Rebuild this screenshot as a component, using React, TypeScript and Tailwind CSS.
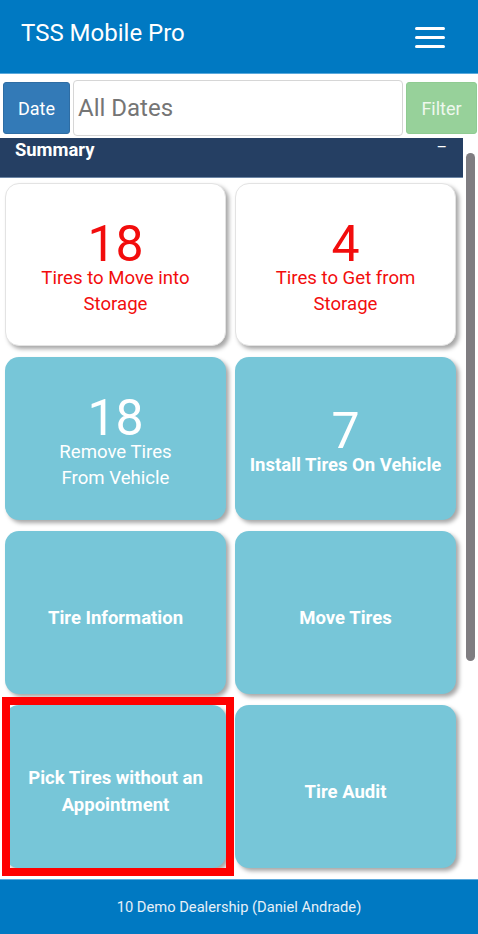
type TileProps = {
  count?: number;
  label: string[];
  light?: boolean;
  bold?: boolean;
  marked?: boolean;
};

function Tile({ count, label, light, bold, marked }: TileProps) {
  const text = light ? 'text-[#f20d0d]' : 'text-white';
  return (
    <div className="relative">
      <div
        className={`h-[163px] rounded-[14px] flex flex-col items-center justify-center pt-[11px] text-center shadow-[3px_3px_4px_rgba(0,0,0,0.35)] ${
          light ? 'bg-white border border-[#e3e3e3]' : 'bg-[#77c6d8]'
        } ${text}`}
      >
        {count !== undefined && (
          <div className="text-[50px] leading-[42px]">{count}</div>
        )}
        {label.map(line => (
          <div
            key={line}
            className={bold ? 'text-[18.5px] leading-[27px] font-bold' : 'text-[18.6px] leading-[26px]'}
          >
            {line}
          </div>
        ))}
      </div>
      {marked && (
        <div className="absolute -left-[3px] -top-[8px] w-[232px] h-[179px] border-[8px] border-[#ff0000]" />
      )}
    </div>
  );
}

export default function App() {
  const tiles: TileProps[] = [
    { count: 18, label: ['Tires to Move into', 'Storage'], light: true },
    { count: 4, label: ['Tires to Get from', 'Storage'], light: true },
    { count: 18, label: ['Remove Tires', 'From Vehicle'] },
    { count: 7, label: ['Install Tires On Vehicle'], bold: true },
    { label: ['Tire Information'], bold: true },
    { label: ['Move Tires'], bold: true },
    { label: ['Pick Tires without an', 'Appointment'], bold: true, marked: true },
    { label: ['Tire Audit'], bold: true },
  ];

  return (
    <div className="h-[934px] w-[478px] flex flex-col overflow-hidden bg-white font-['Roboto',sans-serif]">
      <header className="h-[74px] shrink-0 bg-[#0079c2] border-b border-[#5aa9dc] flex items-start justify-between pl-[21px] pr-[33px] pt-[18px]">
        <h1 className="text-[24px] text-white leading-[30px]">TSS Mobile Pro</h1>
        <button className="mt-[9px] w-[30px] flex flex-col gap-[6px]">
          <span className="h-[3px] bg-white rounded-full" />
          <span className="h-[3px] bg-white rounded-full" />
          <span className="h-[3px] bg-white rounded-full" />
        </button>
      </header>

      <div className="flex items-center gap-[3px] pl-[3px] pr-[1px] pt-[6px] h-[62px] shrink-0">
        <button className="w-[67px] h-[52px] rounded-[3px] bg-[#337ab7] border border-[#2e6da4] text-white text-[18px]">
          Date
        </button>
        <div className="flex-1 h-[56px] rounded-[4px] border border-[#d6d6d6] flex items-center pl-[4px] text-[24px] text-[#757575]">
          All Dates
        </div>
        <button className="w-[71px] h-[52px] rounded-[3px] bg-[#97d19a] border border-[#8fcb92] text-[#eef8ee] text-[18px]">
          Filter
        </button>
      </div>

      <div className="flex-1 flex min-h-0">
        <div className="w-[463px] flex flex-col">
          <div className="h-[40px] mt-[2px] bg-[#253f63] border-b border-[#6c86a6] flex justify-between pl-[15px] pr-[16px] text-white">
            <span className="text-[18.4px] font-bold leading-[23px]">Summary</span>
            <span className="text-[16px] leading-[20px]">–</span>
          </div>
          <div className="grid grid-cols-2 gap-x-[9px] gap-y-[11px] pl-[5px] pr-[7px] pt-[5px]">
            {tiles.map(t => (
              <Tile key={t.label.join(' ')} {...t} />
            ))}
          </div>
        </div>
        <div className="flex-1 pl-[3px] pt-[17px]">
          <div className="w-[9px] h-[508px] rounded-full bg-[#7f7d81]" />
        </div>
      </div>

      <footer className="h-[55px] shrink-0 bg-[#0079c2] border-t border-[#5aa9dc] flex items-center justify-center text-[14.7px] text-[#e6f0f8]">
        10 Demo Dealership (Daniel Andrade)
      </footer>
    </div>
  );
}
